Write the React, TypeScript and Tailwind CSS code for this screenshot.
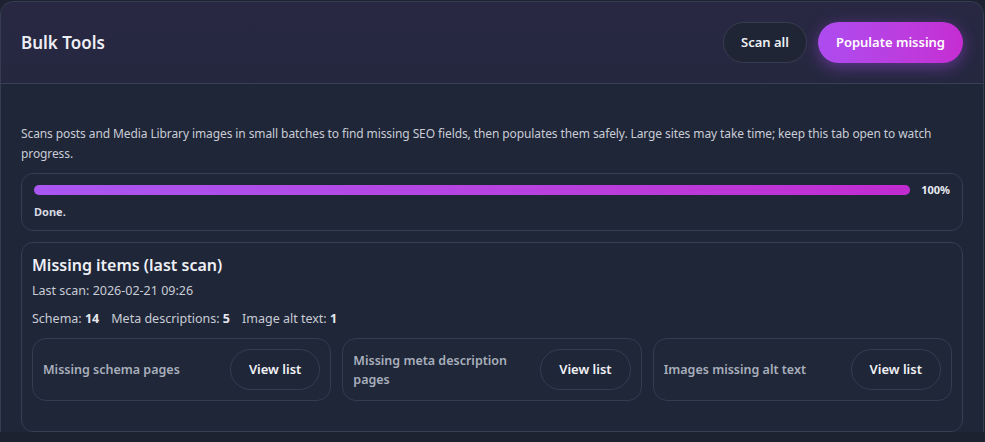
import React from 'react';

// Bulk Tools panel: header with actions, progress of last run, and missing-items summary.

const FONT = "font-['Segoe_UI','Noto_Sans','Open_Sans',sans-serif]";

const LISTS = [
  { key: 'schema', label: 'Missing schema pages' },
  { key: 'meta', label: 'Missing meta description pages' },
  { key: 'alt', label: 'Images missing alt text' },
];

function PillButton({ children }: { children: React.ReactNode }) {
  return (
    <button className="h-[41px] shrink-0 rounded-full border border-[#353d50] bg-[#1e2637] px-[18px] text-[13px] font-semibold text-[#f1f2f6]">
      {children}
    </button>
  );
}

function ListCard({ label }: { label: string }) {
  return (
    <div className="flex h-[63px] items-center justify-between gap-3 rounded-[14px] border border-[#343c4f] bg-[#1f2739] px-[10px]">
      <p className="max-w-[170px] text-[12.5px] font-semibold leading-[19px] text-[#a9afbb]">{label}</p>
      <PillButton>View list</PillButton>
    </div>
  );
}

export default function App() {
  return (
    <div className={`${FONT} h-[442px] overflow-hidden bg-[#1d2230] pt-px`}>
      <div className="mr-px overflow-hidden rounded-t-[14px] border border-b-0 border-[#373c52] bg-[#1f2638]">
        <header className="flex h-[82px] items-center justify-between border-b border-[#3a3f57] bg-gradient-to-b from-[#292843] to-[#25273f] pl-5 pr-5">
          <h1 className="text-[17px] font-semibold text-[#eceef4]">Bulk Tools</h1>
          <div className="flex items-center gap-[11px]">
            <button className="h-[41px] rounded-full border border-[#383e51] bg-[#1f2534] px-[17px] text-[13px] font-semibold text-[#eef0f5]">
              Scan all
            </button>
            <button className="h-[41px] rounded-full bg-gradient-to-r from-[#ad4cf0] to-[#c52dd2] px-[18px] text-[13px] font-semibold text-white shadow-[0_4px_16px_rgba(168,76,240,0.45)]">
              Populate missing
            </button>
          </div>
        </header>

        <div className="flex flex-col px-5 pt-[40px]">
          <p className="text-[12px] leading-[20px] tracking-[-0.1px] text-[#c9ccd5]">
            Scans posts and Media Library images in small batches to find missing SEO fields, then populates them
            safely. Large sites may take time; keep this tab open to watch progress.
          </p>

          <div className="mt-[9px] rounded-[12px] border border-[#363e51] px-[12px] pb-[11px] pt-[9px]">
            <div className="flex h-[14px] items-center gap-[11px]">
              <div className="h-[10px] flex-1 rounded-full bg-[#2c3446]">
                <div className="h-full w-full rounded-full bg-gradient-to-r from-[#a956f2] to-[#c12bd0]" />
              </div>
              <span className="text-[11px] font-bold leading-[14px] text-[#e9ebf1]">100%</span>
            </div>
            <p className="mt-[8px] text-[11px] font-bold leading-[14px] text-[#d7dae2]">Done.</p>
          </div>

          <div className="mt-[11px] rounded-[12px] border border-[#363e51] px-[10px] pb-[30px] pt-[11px]">
            <h2 className="text-[16px] font-semibold leading-[22px] text-[#eef0f5]">Missing items (last scan)</h2>
            <p className="mt-[5px] text-[12.5px] leading-[20px] text-[#c9ccd5]">Last scan: 2026-02-21 09:26</p>
            <div className="mt-[8px] flex gap-[12px] text-[12.5px] leading-[20px] text-[#c9ccd5]">
              <span>
                Schema: <b className="font-bold text-[#e6e8ee]">14</b>
              </span>
              <span>
                Meta descriptions: <b className="font-bold text-[#e6e8ee]">5</b>
              </span>
              <span>
                Image alt text: <b className="font-bold text-[#e6e8ee]">1</b>
              </span>
            </div>
            <div className="mt-[9px] grid grid-cols-3 gap-[11px]">
              {LISTS.map((l) => (
                <ListCard key={l.key} label={l.label} />
              ))}
            </div>
          </div>
        </div>
      </div>
    </div>
  );
}
